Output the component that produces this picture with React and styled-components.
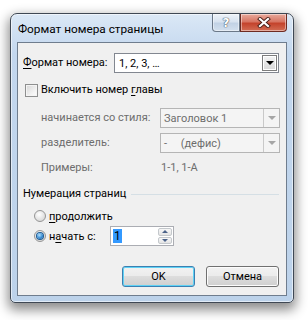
import React from 'react'
import styled, { createGlobalStyle } from 'styled-components';

const GlobalStyle = createGlobalStyle`
    html, body {
        margin: 0;
        padding: 0;
        background: #ffffff;
    }
    body {
        font-family: Roboto, "Noto Sans", sans-serif;
        font-size: 11px;
        color: #000000;
    }
`;

const Page = styled.div`
    width: 308px;
    height: 320px;
    padding: 13px 0 0 10px;
    box-sizing: border-box;
`;

const Window = styled.div`
    width: 284px;
    box-sizing: border-box;
    border: 1px solid #3f4854;
    border-radius: 7px 7px 5px 5px;
    background: linear-gradient(#dbe8f6, #c3d7ee 40px, #bcd2ea);
    box-shadow: inset 0 0 0 1px rgba(255,255,255,0.55), 0 5px 12px 2px rgba(0,0,0,0.45);
    padding: 0 6px 6px 6px;
`;

const TitleBar = styled.div`
    height: 28px;
    display: flex;
    justify-content: space-between;
    align-items: flex-start;
`;

const Title = styled.div`
    padding: 7px 0 0 1px;
    font-size: 11.8px;
    line-height: 16px;
    color: #000;
    white-space: nowrap;
`;

const Caption = styled.div`
    display: flex;
`;

const CapButton = styled.div`
    height: 18px;
    display: flex;
    align-items: center;
    justify-content: center;
    box-sizing: border-box;
    border: 1px solid ${p => p.$close ? '#6e2b22' : '#6b7888'};
    border-top: none;
    width: ${p => p.$close ? '47px' : '28px'};
    border-radius: ${p => p.$close ? '0 0 4px 0' : '0 0 0 4px'};
    background: ${p => p.$close
        ? 'linear-gradient(#e9aa9c, #d77563 45%, #c4432c 55%, #d26d55)'
        : 'linear-gradient(#eef3f9, #d8e3f0 45%, #c2d2e5 55%, #d3e0ee)'};
    box-shadow: inset 0 0 0 1px rgba(255,255,255,0.45);
    font-family: "DejaVu Sans", sans-serif;
    font-weight: bold;
    font-size: 12px;
    color: #ffffff;
    text-shadow: 0 0 1px #4c5a6a, 0 0 1px #4c5a6a, 0 0 1px #4c5a6a;
`;

const Client = styled.div`
    border: 1px solid #6f7d8e;
    background: #f0f0f0;
    padding: 10px 7px 8px 5px;
    display: flex;
    flex-direction: column;
`;

const FieldRow = styled.div`
    display: flex;
    align-items: center;
`;

const Label = styled.span`
    width: ${p => p.$w ? p.$w + 'px' : 'auto'};
    color: ${p => p.$disabled ? '#6d6d6d' : '#000'};
    white-space: nowrap;
    line-height: 16px;
`;

const U = styled.span`
    text-decoration: underline;
    text-underline-offset: 2px;
`;

const Combo = styled.div`
    width: ${p => p.$w}px;
    height: 20px;
    box-sizing: border-box;
    border: 1px solid ${p => p.$disabled ? '#b5b5b5' : '#828790'};
    background: ${p => p.$disabled ? '#f4f4f4' : '#ffffff'};
    color: ${p => p.$disabled ? '#6d6d6d' : '#000'};
    display: flex;
    align-items: stretch;
    padding: ${p => p.$disabled ? '0' : '1px'};
`;

const ComboText = styled.div`
    flex: 1;
    padding-left: 3px;
    display: flex;
    align-items: center;
    white-space: pre;
`;

const DropButton = styled.div`
    width: ${p => p.$disabled ? '16px' : '15px'};
    box-sizing: border-box;
    border: ${p => p.$disabled ? 'none' : '1px solid #7d7d7d'};
    border-left: 1px solid ${p => p.$disabled ? '#c9c9c9' : '#7d7d7d'};
    background: ${p => p.$disabled ? '#f4f4f4' : 'linear-gradient(#f4f4f4, #e6e6e6 50%, #d9d9d9)'};
    box-shadow: ${p => p.$disabled ? 'none' : 'inset 0 0 0 1px #ffffff'};
    display: flex;
    align-items: center;
    justify-content: center;
`;

const Arrow = styled.div`
    width: 0;
    height: 0;
    border-left: 4px solid transparent;
    border-right: 4px solid transparent;
    border-top: 4px solid ${p => p.$disabled ? '#a6a6a6' : '#000'};
`;

const CheckRow = styled.label`
    display: flex;
    align-items: center;
    gap: 3px;
    margin: 9px 0 0 2px;
`;

const CheckBox = styled.span`
    width: 13px;
    height: 13px;
    box-sizing: border-box;
    border: 1px solid #8e8f8f;
    background: linear-gradient(135deg, #d6d6d6, #f4f4f4 70%, #fdfdfd);
    box-shadow: inset 0 0 0 1px #f4f4f4;
`;

const SubGrid = styled.div`
    display: grid;
    grid-template-columns: 119px 120px;
    grid-auto-rows: 20px;
    row-gap: 5px;
    align-items: center;
    margin: 10px 0 0 18px;
`;

const Examples = styled.span`
    color: #6d6d6d;
    line-height: 16px;
    margin-left: 1px;
`;

const GroupHeader = styled.div`
    display: flex;
    align-items: center;
    gap: 5px;
    margin: 8px 0 0 0;
    height: 16px;
`;

const GroupLine = styled.div`
    flex: 1;
    height: 1px;
    background: #d5dfe5;
`;

const RadioRow = styled.div`
    display: flex;
    align-items: center;
    height: ${p => p.$h || 16}px;
    margin: ${p => p.$m || 0}px 0 0 11px;
`;

const RadioLabel = styled.label`
    display: flex;
    align-items: center;
    gap: 3px;
    white-space: nowrap;
    width: ${p => p.$w ? p.$w + 'px' : 'auto'};
`;

const Radio = styled.span`
    width: 12px;
    height: 12px;
    box-sizing: border-box;
    border-radius: 50%;
    border: 1px solid #959595;
    background: radial-gradient(circle at 40% 35%, #ffffff, #e6e6e6 50%, #cfcfcf);
    display: flex;
    align-items: center;
    justify-content: center;
`;

const RadioDot = styled.span`
    width: 6px;
    height: 6px;
    border-radius: 50%;
    background: radial-gradient(circle at 40% 35%, #b6e1fb, #3a8fd6 55%, #0d4f99);
    box-shadow: 0 0 0 1px #1c5a92;
`;

const Spin = styled.div`
    width: 64px;
    height: 20px;
    box-sizing: border-box;
    border: 1px solid #abadb3;
    background: #ffffff;
    display: flex;
    align-items: stretch;
    padding: 1px;
`;

const SpinText = styled.div`
    flex: 1;
    display: flex;
    align-items: center;
    padding-left: 1px;
`;

const Selected = styled.span`
    background: #3399ff;
    color: #000;
    padding: 0 1px;
    line-height: 14px;
    font-size: 12px;
`;

const SpinButtons = styled.div`
    width: 14px;
    display: flex;
    flex-direction: column;
    gap: 1px;
`;

const SpinButton = styled.div`
    flex: 1;
    box-sizing: border-box;
    border: 1px solid #c4c8cc;
    border-radius: 2px;
    background: linear-gradient(#f7f7f7, #e4e4e4);
    display: flex;
    align-items: center;
    justify-content: center;
`;

const SpinArrow = styled.div`
    width: 0;
    height: 0;
    border-left: 3px solid transparent;
    border-right: 3px solid transparent;
    ${p => p.$up ? 'border-bottom: 3px solid #4b6289;' : 'border-top: 3px solid #4b6289;'}
`;

const ButtonRow = styled.div`
    display: flex;
    justify-content: flex-end;
    gap: 11px;
    margin-top: 20px;
`;

const Button = styled.button`
    width: 73px;
    height: 21px;
    box-sizing: border-box;
    border: 1px solid ${p => p.$default ? '#3c7fb1' : '#707070'};
    border-radius: 3px;
    background: linear-gradient(#f2f2f2, #ebebeb 50%, #dddddd 50%, #cfcfcf);
    box-shadow: inset 0 0 0 1px ${p => p.$default ? '#5fd2f5' : '#fcfcfc'};
    font-family: Roboto, "Noto Sans", sans-serif;
    font-size: 11px;
    color: #000;
    padding: 0;
    cursor: pointer;
`;

const CloseIcon = () => (
    <svg width="14" height="11" viewBox="0 0 14 11">
        <path d="M3 2 L11 9 M11 2 L3 9" stroke="#4a1f18" strokeWidth="4" strokeLinecap="square" />
        <path d="M3 2 L11 9 M11 2 L3 9" stroke="#ffffff" strokeWidth="2.2" strokeLinecap="square" />
    </svg>
);

const App = () => {
    return (
        <>
            <GlobalStyle />
            <Page>
                <Window>
                    <TitleBar>
                        <Title>Формат номера страницы</Title>
                        <Caption>
                            <CapButton>?</CapButton>
                            <CapButton $close><CloseIcon /></CapButton>
                        </Caption>
                    </TitleBar>
                    <Client>
                        <FieldRow>
                            <Label $w={91}><U>Ф</U>ормат номера:</Label>
                            <Combo $w={165}>
                                <ComboText>1, 2, 3, …</ComboText>
                                <DropButton><Arrow /></DropButton>
                            </Combo>
                        </FieldRow>

                        <CheckRow>
                            <CheckBox />
                            <Label>Включить номер <U>г</U>лавы</Label>
                        </CheckRow>

                        <SubGrid>
                            <Label $disabled>начинается со стиля:</Label>
                            <Combo $w={120} $disabled>
                                <ComboText>Заголовок 1</ComboText>
                                <DropButton $disabled><Arrow $disabled /></DropButton>
                            </Combo>
                            <Label $disabled>разделитель:</Label>
                            <Combo $w={120} $disabled>
                                <ComboText>{'-     (дефис)'}</ComboText>
                                <DropButton $disabled><Arrow $disabled /></DropButton>
                            </Combo>
                            <Label $disabled>Примеры:</Label>
                            <Examples>1-1, 1-A</Examples>
                        </SubGrid>

                        <GroupHeader>
                            <Label>Нумерация страниц</Label>
                            <GroupLine />
                        </GroupHeader>

                        <RadioRow $m={6}>
                            <RadioLabel>
                                <Radio />
                                <span><U>п</U>родолжить</span>
                            </RadioLabel>
                        </RadioRow>
                        <RadioRow $m={2} $h={20}>
                            <RadioLabel $w={76}>
                                <Radio><RadioDot /></Radio>
                                <span>н<U>а</U>чать с:</span>
                            </RadioLabel>
                            <Spin>
                                <SpinText><Selected>1</Selected></SpinText>
                                <SpinButtons>
                                    <SpinButton><SpinArrow $up /></SpinButton>
                                    <SpinButton><SpinArrow /></SpinButton>
                                </SpinButtons>
                            </Spin>
                        </RadioRow>

                        <ButtonRow>
                            <Button $default>OK</Button>
                            <Button>Отмена</Button>
                        </ButtonRow>
                    </Client>
                </Window>
            </Page>
        </>
    )
}

export default App
